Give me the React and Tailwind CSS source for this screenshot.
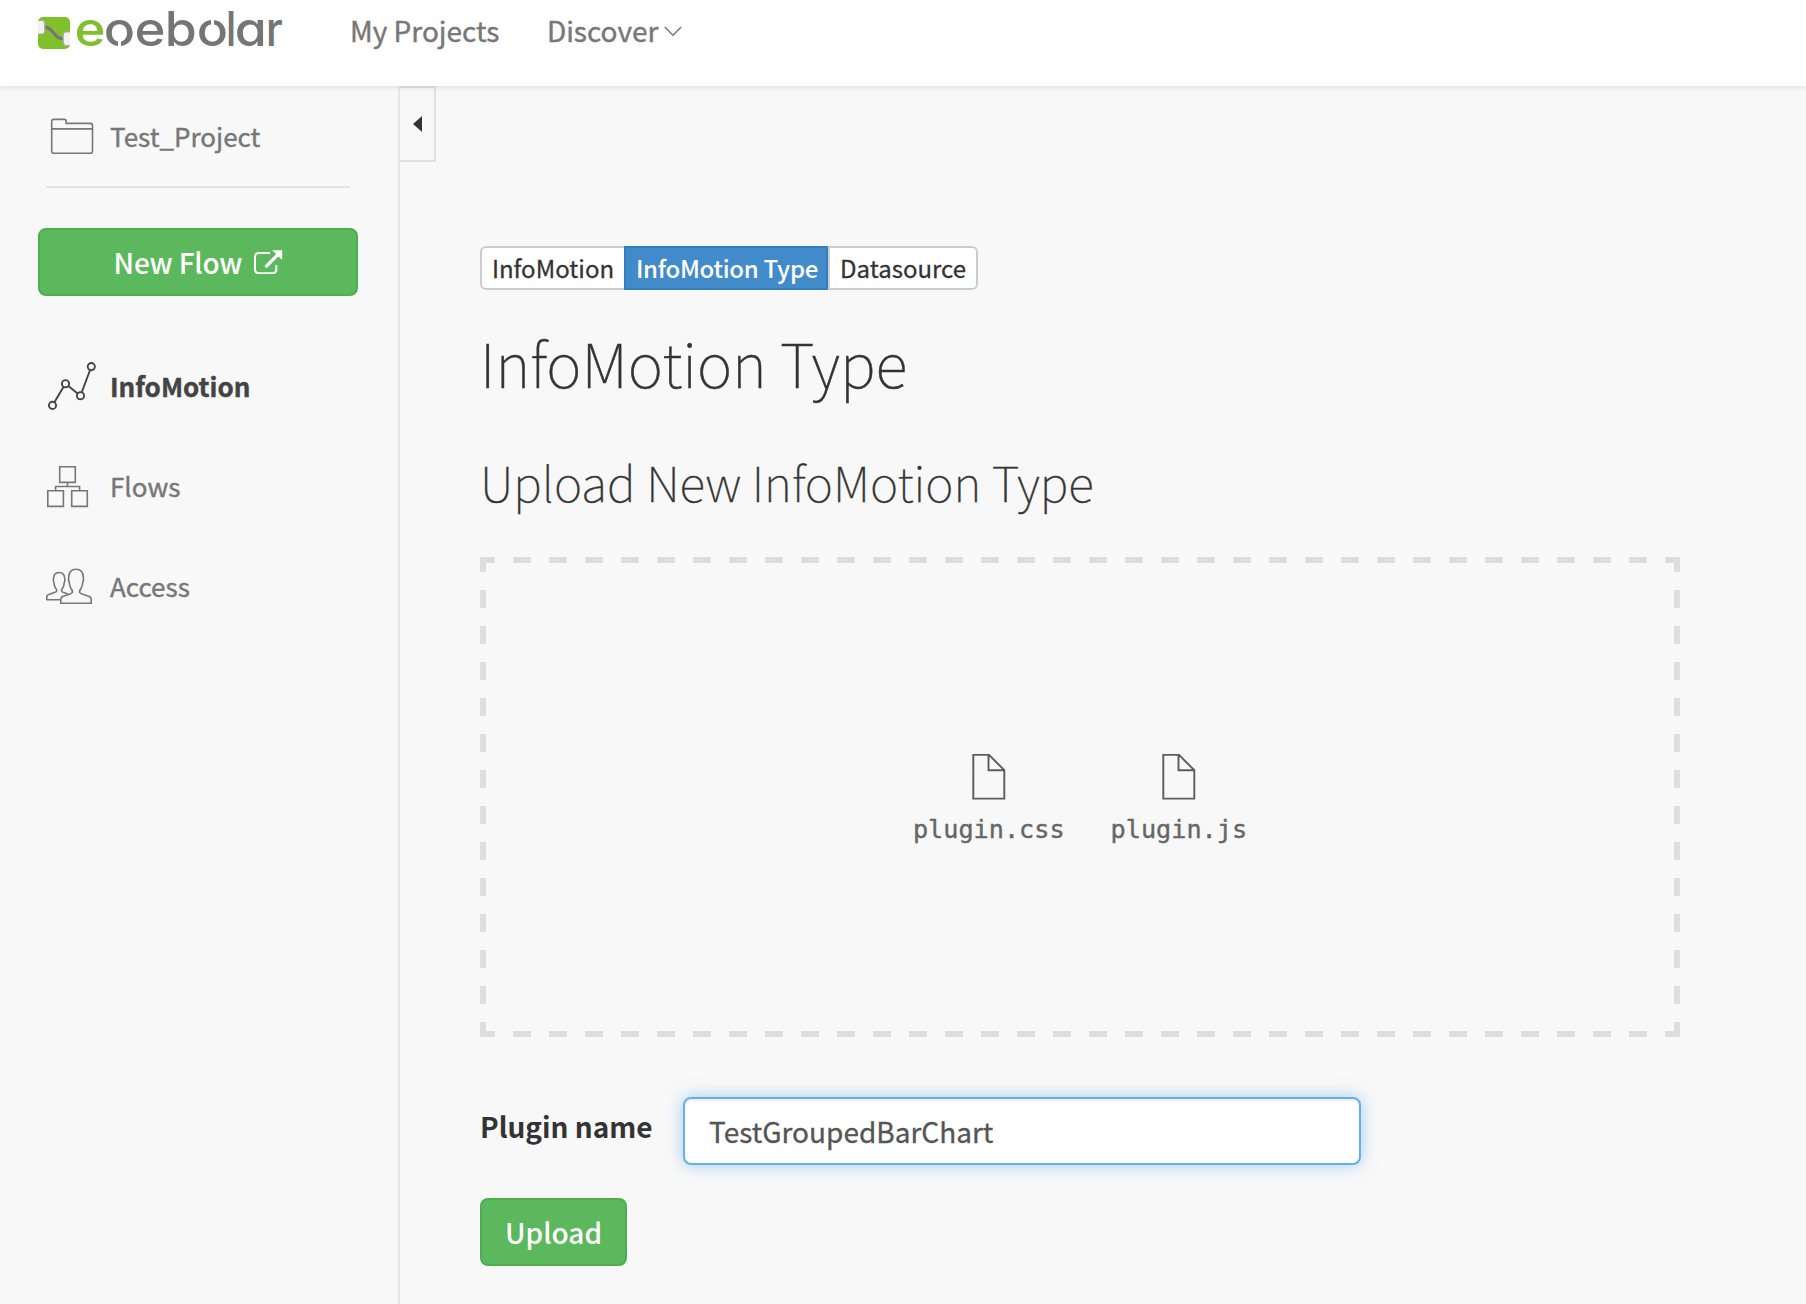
const wordmark = [
  { char: "e", box: "mr-[2px] w-[28px] text-[#80c02a]", glyph: "scale-x-[1.1]" },
  { char: "o", box: "mr-[3px] w-[27px]", glyph: "scale-x-[1.08]", notch: "top-[41px] left-[12px]" },
  { char: "e", box: "mr-[3px] w-[28px]", glyph: "scale-x-[1.1]" },
  { char: "b", box: "mr-[3px] w-[28px]", glyph: "scale-x-[1.08]" },
  { char: "o", box: "mr-[3px] w-[28px]", glyph: "scale-x-[1.08]", notch: "top-[18px] left-[12.5px]" },
  { char: "l", box: "mr-[4px] w-[4px]", glyph: "scale-x-[0.88]" },
  { char: "a", box: "mr-[2px] w-[28px]", glyph: "scale-x-[1.08]" },
  { char: "r", box: "w-[14px]", glyph: "scale-x-[0.92]" },
];

function Logo() {
  return (
    <div className="flex h-[60px] items-start">
      <svg className="mt-[17px] h-8 w-8" viewBox="0 0 32 32" fill="none">
        <rect width="32" height="32" rx="5" fill="#80c02a" />
        <path d="M0 3.500h4q2.800 0 2.800 2.500v8q0 3-2.800 3H0z" fill="#f1f1f1" />
        <path d="M0 3.500h4q2.800 0 2.800 2.500v8q0 3-2.800 3H0" stroke="#aaa" strokeWidth="1.200" />
        <path d="M32 15h-4q-2.800 0-2.800 2.500v8q0 3 2.800 3H32z" fill="#f1f1f1" />
        <path d="M32 15h-4q-2.800 0-2.800 2.500v8q0 3 2.800 3H32" stroke="#aaa" strokeWidth="1.200" />
        <path d="M7.500 10.300c4.500 0 6 3.200 8.500 6.200s4 5 8.500 5" stroke="#757575" strokeWidth="3.200" />
      </svg>
      <div className="ml-[6px] flex font-[Inter,sans-serif] text-[48px] leading-[58px] font-medium text-[#757575] [font-feature-settings:'cv11']">
        {wordmark.map(({ char, box, glyph, notch }, i) => (
          <span key={i} className={`relative flex justify-center ${box}`}>
            <span className={glyph}>{char}</span>
            {notch && <span className={`absolute h-[8px] w-[3px] bg-white ${notch}`} />}
          </span>
        ))}
      </div>
    </div>
  );
}

function FolderIcon() {
  return (
    <svg className="h-9 w-11" viewBox="0 0 44 36" fill="none" stroke="#777" strokeWidth="1.600">
      <path d="M2.200 4.200q0-2 2-2h10.500q2 0 2 2v2h24q2.300 0 2.300 2.300v25.200q0 2.300-2.300 2.300H4.500q-2.300 0-2.300-2.300zM2.200 11.700h40.800" transform="translate(-.5 -.8)" />
    </svg>
  );
}

function TrendIcon() {
  return (
    <svg className="h-12 w-12" viewBox="0 0 48 48" fill="none" stroke="#444" strokeWidth="1.900">
      <circle cx="4.500" cy="43.400" r="3.600" />
      <circle cx="17.500" cy="21.700" r="3.600" />
      <circle cx="32.500" cy="33.700" r="3.600" />
      <circle cx="43.300" cy="4.600" r="3.600" />
      <path d="m6.400 40.300 9.200-15.500M20.400 24l9.200 7.400M33.800 30.200l8.300-22.200" />
    </svg>
  );
}

function FlowsIcon() {
  return (
    <svg className="h-[42px] w-[42px]" viewBox="0 0 42 42" fill="none" stroke="#777" strokeWidth="1.600">
      <path d="M12.700.8h15.600v15.600H12.700zM.8 24.800h15.600v15.600H.8zM24.700 24.800h15.600v15.600H24.700zM20.500 16.400v4M8.600 24.800v-4.300h24v4.300" />
    </svg>
  );
}

function PeopleIcon() {
  return (
    <svg className="h-9 w-[46px]" viewBox="0 0 46 36" fill="none" stroke="#777" strokeWidth="1.600" strokeLinejoin="round">
      <path d="M14.800 35.200V31.500q0-2.500 2.500-3.300l6-1.900q3.200-1 3.200-2.500-.2-1.700-2-4.300-1-2-1.300-5.500-.9-1.500-.6-4 0-8.700 7.400-8.700t7.400 8.700q.3 2.500-.6 4-.3 3.500-1.300 5.500-1.800 2.600-2 4.300 0 1.500 3.200 2.500l6 1.900q2.500.8 2.500 3.300v3.700z" />
      <path d="M14.800 31.700H.8v-2.900q0-1.800 2-2.300l5.500-1.900q2.500-.7 2.500-2-.1-1.300-1.600-3.200-1-1.600-1.200-4.600-.8-1.200-.6-3.400 0-6.900 5.700-6.900t5.700 6.900q.2 2.200-.6 3.400-.2 3-1.200 4.600-1.500 1.900-1.600 3.200.3 1.500 3 2.200l3.500 1.100" />
    </svg>
  );
}

function ExternalIcon() {
  return (
    <svg className="h-6 w-[29px]" viewBox="0 0 29 24" fill="none" stroke="#fff">
      <path d="M16 3H5Q1 3 1 7v12.200q0 4 4 4h13.300q4 0 4-4V15" strokeWidth="2" />
      <path d="M12.500 16 24 4.500" strokeWidth="3.200" strokeLinecap="round" />
      <path d="M18.200.3H28.200V10z" fill="#fff" stroke="none" />
    </svg>
  );
}

function FileIcon() {
  return (
    <svg className="h-[46px] w-[34px]" viewBox="0 0 34 46" fill="none" stroke="#5c5c5c" strokeWidth="1.900">
      <path d="M1.300.9H17L32.300 16.200v28.400H1.300zM16.500.9v15.300h15.800" />
    </svg>
  );
}

const navItems = [
  { label: "InfoMotion", Icon: TrendIcon, text: "font-bold text-[#444]", pad: "pl-[2px]" },
  { label: "Flows", Icon: FlowsIcon, text: "text-[#777]", pad: "pt-px pl-px" },
  { label: "Access", Icon: PeopleIcon, text: "text-[#777]", pad: "" },
];

function Sidebar() {
  return (
    <aside className="w-[400px] shrink-0 border-r-2 border-[#e7e7e7]">
      <div className="ml-[46px] flex h-[102px] w-[304px] items-center border-b-2 border-[#e3e3e3] text-[26px] text-[#777]">
        <span className="w-[64px] pl-[4px]">
          <FolderIcon />
        </span>
        <span className="pb-[2px] [-webkit-text-stroke:0.4px]">Test_Project</span>
      </div>
      <button className="mt-10 ml-[38px] flex h-[68px] w-[320px] items-center justify-center rounded-lg border-2 border-[#4cae4c] bg-[#5cb85c] pl-px text-[28px] font-medium tracking-[-0.2px] text-white">
        New Flow
        <span className="ml-[12px]">
          <ExternalIcon />
        </span>
      </button>
      <nav className="mt-10 ml-[46px] text-[26px]">
        {navItems.map(({ label, Icon, text, pad }) => (
          <div key={label} className={`flex h-[100px] items-center ${text}`}>
            <span className={`w-[64px] ${pad}`}>
              <Icon />
            </span>
            <span className="pb-[2px] [-webkit-text-stroke:0.4px]">{label}</span>
          </div>
        ))}
      </nav>
    </aside>
  );
}

const dashes =
  "bg-[repeating-linear-gradient(90deg,#ddd_0_15px,transparent_15px_33px,#ddd_33px_36px),repeating-linear-gradient(90deg,#ddd_0_15px,transparent_15px_33px,#ddd_33px_36px),repeating-linear-gradient(180deg,#ddd_0_15px,transparent_15px_33px,#ddd_33px_36px),repeating-linear-gradient(180deg,#ddd_0_15px,transparent_15px_33px,#ddd_33px_36px)] bg-no-repeat [background-size:100%_6px,100%_6px,6px_100%,6px_100%] [background-position:0_0,0_100%,0_0,100%_0]";

export default function App() {
  return (
    <div className="h-[1304px] w-[1806px] overflow-hidden bg-[#f8f8f8] font-['Noto_Sans_CJK_SC',sans-serif] text-[#333]">
      <header className="relative flex h-[86px] bg-white pl-[38px] text-[28px] leading-10 text-[#777] shadow-[0_1px_6px_rgba(0,0,0,0.12)]">
        <Logo />
        <a className="mt-[10px] ml-[69px] h-10 [-webkit-text-stroke:0.4px]">My Projects</a>
        <a className="mt-[10px] ml-[47.5px] flex h-10 items-center [-webkit-text-stroke:0.4px]">
          Discover
          <svg className="mt-[2px] ml-[6px] h-[11px] w-[18px]" viewBox="0 0 18 11" fill="none" stroke="#777" strokeWidth="1.500">
            <path d="m.8 1 8.200 8.300L17.200 1" />
          </svg>
        </a>
      </header>
      <div className="flex h-[1218px]">
        <Sidebar />
        <button className="flex h-[76px] w-9 items-center justify-center border-2 border-l-0 border-[#e1e1e1] pb-[1px]">
          <svg className="h-4 w-[9px]" viewBox="0 0 9 16" fill="#333">
            <path d="M9 0v16L0 8z" />
          </svg>
        </button>
        <main className="ml-11 w-[1200px] pt-40">
          <div className="flex h-11 w-[498px] text-[24px] leading-[40px]">
            <button className="w-[144px] rounded-l-md border-2 border-r-0 border-[#ccc] bg-white [-webkit-text-stroke:0.3px]">InfoMotion</button>
            <button className="w-[204px] border-2 border-[#357ebd] bg-[#428bca] pl-[2px] font-medium tracking-[-0.3px] text-white">InfoMotion Type</button>
            <button className="w-[150px] rounded-r-md border-2 border-[#ccc] bg-white [-webkit-text-stroke:0.3px]">Datasource</button>
          </div>
          <h1 className="mt-9 text-[60px] leading-[72px] font-thin [-webkit-text-stroke:0.5px]">InfoMotion Type</h1>
          <h2 className="mt-[55px] text-[48px] leading-[56px] font-thin [-webkit-text-stroke:0.4px]">Upload New InfoMotion Type</h2>
          <div className={`mt-12 flex h-[480px] w-[1200px] justify-center gap-[46px] pt-[197px] font-['DejaVu_Sans_Mono',monospace] text-[25.2px] leading-[30px] text-[#666] [-webkit-text-stroke:0.4px] ${dashes}`}>
            <div className="flex flex-col items-center gap-[15px]">
              <FileIcon />
              plugin.css
            </div>
            <div className="flex flex-col items-center gap-[15px]">
              <FileIcon />
              plugin.js
            </div>
          </div>
          <div className="mt-[60px] flex h-[68px] items-center text-[28px]">
            <label className="mb-[11px] w-[203px] font-bold">Plugin name</label>
            <input
              className="h-[68px] w-[678px] rounded-lg border-2 border-[#66afe9] bg-white px-[24px] text-[#555] shadow-[inset_0_2px_2px_rgba(0,0,0,0.075),0_0_16px_rgba(102,175,233,0.6)] outline-none [-webkit-text-stroke:0.3px]"
              defaultValue="TestGroupedBarChart"
            />
          </div>
          <button className="mt-[33px] h-[68px] w-[147px] rounded-lg border-2 border-[#4cae4c] bg-[#5cb85c] text-[28px] font-medium text-white">Upload</button>
        </main>
      </div>
    </div>
  );
}
